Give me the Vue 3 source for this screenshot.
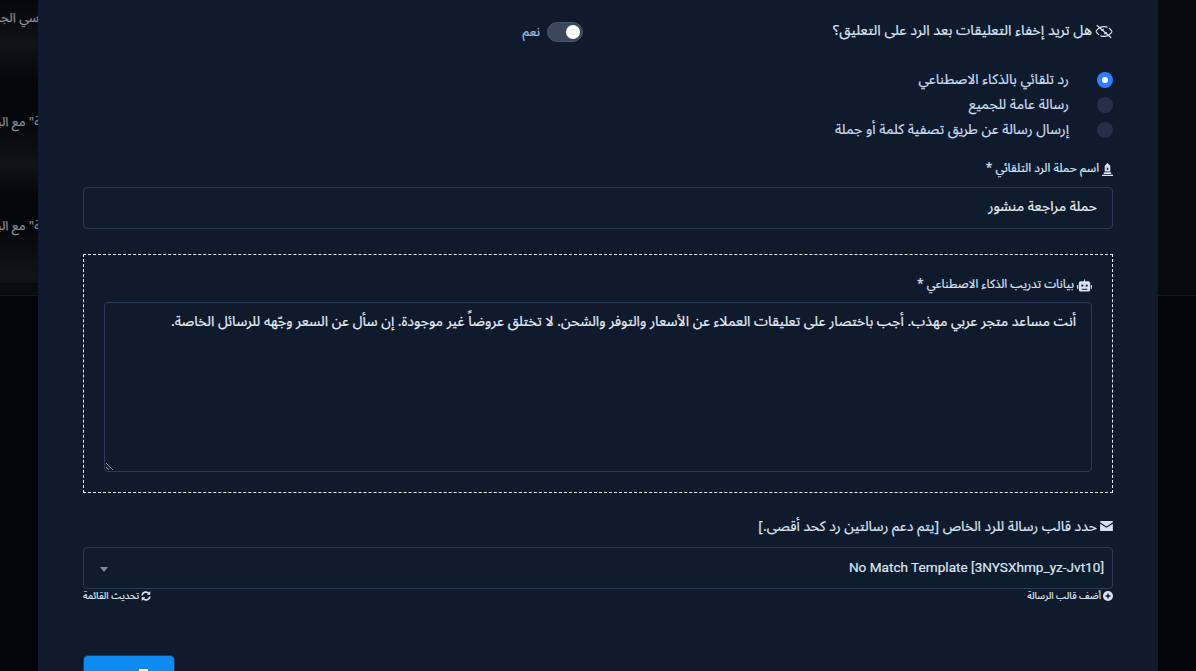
<script setup>
const radios = [
  { text: 'رد تلقائي بالذكاء الاصطناعي', on: true },
  { text: 'رسالة عامة للجميع', on: false },
  { text: 'إرسال رسالة عن طريق تصفية كلمة أو جملة', on: false }
]
const backdropRows = [
  { text: 'أساسي الجديد', shift: -18 },
  { text: 'الصفحة" مع البيع', shift: -36 },
  { text: 'الصفحة" مع البيع', shift: -36 }
]
</script>

<template>
  <div class="page" dir="rtl">
    <aside class="side side-right"></aside>
    <main class="modal">
      <section class="toggle-row">
        <div class="q-label">
          <svg class="i-eye" viewBox="0 0 20 16" fill="none" stroke="currentColor" stroke-width="1.3">
            <path d="M2 1l16 14" />
            <path d="M1 8c2-3.500 5-5.500 9-5.500 1.500 0 3 .3 4 .9M19 8c-2 3.500-5 5.500-9 5.500-1.500 0-3-.3-4-.9" />
            <path d="M1 8c1 1.500 2 2.700 3.500 3.500M19 8c-1-1.500-2-2.700-3.500-3.500" />
            <path d="M7 7a3.200 3.200 0 0 1 3-1.500M13 9a3.200 3.200 0 0 1-3 1.500" />
          </svg>
          <span>هل تريد إخفاء التعليقات بعد الرد على التعليق؟</span>
        </div>
        <div class="toggle-wrap">
          <span class="switch"><span class="knob"></span></span>
          <span class="yes">نعم</span>
        </div>
      </section>

      <section class="radios">
        <div v-for="r in radios" :key="r.text" class="radio-row">
          <span class="radio" :class="{ on: r.on }"></span>
          <span class="radio-text">{{ r.text }}</span>
        </div>
      </section>

      <label class="small-label name-label">
        <svg class="i-small" viewBox="0 0 12 14" fill="currentColor">
          <path d="M6 0l3 3v6.200H3V3zM2 10h8v2H2zM0 12.700h12V14H0z" />
          <path d="M5.200 5h1.600v2.500H5.200z" fill="#0f1b2d" />
        </svg>
        <span>اسم حملة الرد التلقائي *</span>
      </label>
      <div class="field">حملة مراجعة منشور</div>

      <section class="dashed">
        <label class="small-label ai-label">
          <svg class="i-robot" viewBox="0 0 16 13" fill="currentColor">
            <path d="M7.400 0h1.200v2H12a2 2 0 0 1 2 2v7a2 2 0 0 1-2 2H4a2 2 0 0 1-2-2V4a2 2 0 0 1 2-2h3.400z" />
            <path d="M0 6h1.300v4H0zM14.700 6H16v4h-1.300z" />
            <circle cx="5.700" cy="6.500" r="1.200" fill="#0f1b2d" />
            <circle cx="10.300" cy="6.500" r="1.200" fill="#0f1b2d" />
            <path d="M5 10h6v1H5z" fill="#0f1b2d" />
          </svg>
          <span>بيانات تدريب الذكاء الاصطناعي *</span>
        </label>
        <div class="textarea">
          <span>أنت مساعد متجر عربي مهذب. أجب باختصار على تعليقات العملاء عن الأسعار والتوفر والشحن. لا تختلق عروضاً غير موجودة. إن سأل عن السعر وجّهه للرسائل الخاصة.</span>
          <svg class="grip" viewBox="0 0 8 8" stroke="#b8c0cc" stroke-width=".8" fill="none">
            <path d="M0 1l7 7M0 5l3 3" />
          </svg>
        </div>
      </section>

      <label class="tpl-label">
        <svg class="i-mail" viewBox="0 0 14 11" fill="currentColor">
          <path d="M0 0h14v1.400L7 6 0 1.400zM0 3l7 4.500L14 3v8H0z" />
        </svg>
        <span>حدد قالب رسالة للرد الخاص [يتم دعم رسالتين رد كحد أقصى.]</span>
      </label>
      <div class="select">
        <span class="select-value" dir="ltr">No Match Template [3NYSXhmp_yz-Jvt10]</span>
        <span class="caret"></span>
      </div>
      <div class="under">
        <span class="under-item">
          <svg class="i-tiny" viewBox="0 0 10 10">
            <circle cx="5" cy="5" r="5" fill="currentColor" />
            <path d="M5 2.500v5M2.500 5h5" stroke="#0f1b2d" stroke-width="1.400" />
          </svg>
          أضف قالب الرسالة
        </span>
        <span class="under-item">
          <svg class="i-tiny" viewBox="0 0 10 10" fill="none" stroke="currentColor" stroke-width="1.700">
            <path d="M1 4.300A4 4 0 0 1 8 2.500M9 5.700A4 4 0 0 1 2 7.500" />
            <path d="M9 .5v3H6M1 9.500v-3h3" fill="currentColor" stroke-width=".6" />
          </svg>
          تحديث القائمة
        </span>
      </div>

      <div class="actions">
        <button class="save" type="button"><span class="save-icon"></span></button>
      </div>
    </main>
    <aside class="side side-left">
      <div v-for="(t, i) in backdropRows" :key="i" class="bg-row">
        <span class="bg-text" :style="{ marginRight: t.shift + 'px' }">{{ t.text }}</span>
      </div>
    </aside>
  </div>
</template>

<style>
html, body { margin: 0; background: #02050c; overflow: hidden; }
</style>

<style scoped>
.page {
  width: 1196px;
  height: 671px;
  overflow: hidden;
  display: grid;
  grid-template-columns: 38px 1120px 38px;
  font-family: "Noto Sans Arabic", Roboto, "Noto Sans", sans-serif;
  background: #02050c;
  color: #dbe7f5;
  -webkit-text-stroke: 0.2px currentColor;
}
.side { height: 671px; overflow: hidden; }
.side-right {
  background: linear-gradient(#06090f 0 295px, #14171d 295px 296px, #02050c 296px);
}
.side-left {
  background: linear-gradient(#05070c 0, #101318 45px, #04060b 80px, #05070c 120px, #101318 165px, #04060b 195px, #05070c 230px, #0f1217 270px, #0f1217 283px, #080b10 283px, #080b10 295px, #14171d 295px, #14171d 296px, #02050c 296px);
  display: flex;
  flex-direction: column;
}
.modal {
  background: #0f1a2c;
  height: 671px;
  padding: 0 45px;
  box-sizing: border-box;
  overflow: hidden;
}
.toggle-row {
  display: grid;
  grid-template-columns: 500px 500px;
  column-gap: 30px;
  align-items: center;
  padding-top: 20px;
  height: 24px;
}
.q-label {
  display: flex;
  align-items: center;
  gap: 3px;
  font-size: 14.4px;
  line-height: 20px;
  color: #d7e4f3;
  padding-bottom: 2px;
}
.i-eye { width: 18px; height: 15px; flex: none; }
.toggle-wrap { display: flex; align-items: center; gap: 7px; }
.switch {
  width: 36px;
  height: 20px;
  box-sizing: border-box;
  border-radius: 10px;
  background: #3a485e;
  border: 1px solid #465570;
  display: flex;
  justify-content: flex-start;
  align-items: center;
  padding: 0 2px;
}
.knob { width: 14px; height: 14px; border-radius: 50%; background: #fff; }
.yes { font-size: 13px; line-height: 20px; color: #9fc0e4; }
.radios { margin-top: 28px; display: flex; flex-direction: column; gap: 9px; }
.radio-row { display: flex; align-items: center; height: 16px; }
.radio {
  width: 16px;
  height: 16px;
  flex: none;
  border-radius: 50%;
  background: #243049;
  margin-left: 28px;
}
.radio.on {
  background: #2d7ff9;
  position: relative;
}
.radio.on::after {
  content: "";
  position: absolute;
  left: 5px;
  top: 5px;
  width: 6px;
  height: 6px;
  background: #fff;
  border-radius: 50%;
}
.radio-text { font-size: 14px; line-height: 16px; color: #c9dcf2; }
.small-label {
  display: flex;
  align-items: center;
  gap: 3px;
  font-size: 12px;
  line-height: 16px;
  color: #d7e4f3;
}
.name-label { margin-top: 23px; height: 16px; }
.i-small { width: 11px; height: 13px; flex: none; }
.field {
  margin-top: 10px;
  height: 42px;
  box-sizing: border-box;
  border: 1px solid #2a3b58;
  border-radius: 4px;
  background: #0f1c2e;
  padding: 0 15px;
  font-size: 14px;
  line-height: 38px;
  color: #e5edf7;
}
.dashed {
  margin-top: 25px;
  height: 239px;
  box-sizing: border-box;
  border: 1px dashed #e8edf3;
  padding: 20px;
}
.ai-label { height: 20px; }
.i-robot { width: 15px; height: 13px; flex: none; color: #d5e3f5; }
.textarea {
  position: relative;
  margin-top: 7px;
  height: 170px;
  box-sizing: border-box;
  border: 1px solid #2a3b58;
  border-radius: 4px;
  padding: 9px 15px;
  font-size: 14.08px;
  line-height: 20px;
  color: #e5edf7;
}
.grip { position: absolute; left: 1px; bottom: 1px; width: 8px; height: 8px; }
.tpl-label {
  margin-top: 23px;
  display: flex;
  align-items: center;
  gap: 3px;
  height: 20px;
  font-size: 14px;
  color: #d7e4f3;
}
.i-mail { width: 13px; height: 10px; flex: none; color: #d5e3f5; }
.select {
  margin-top: 11px;
  height: 42px;
  box-sizing: border-box;
  border: 1px solid #2a3b58;
  border-radius: 4px;
  background: #0f1c2e;
  display: flex;
  justify-content: space-between;
  align-items: center;
  padding: 0 8px 0 16px;
}
.select-value { font-family: Roboto, sans-serif; font-size: 13.6px; color: #dbe7f5; padding-bottom: 2px; }
.caret {
  width: 0;
  height: 0;
  border-top: 5px solid #7f8790;
  border-left: 4px solid transparent;
  border-right: 4px solid transparent;
  margin-top: 3px;
}
.under {
  display: flex;
  justify-content: space-between;
  margin-top: 1px;
  font-size: 9.8px;
  line-height: 12px;
  color: #d7e4f3;
}
.under-item { display: flex; align-items: center; gap: 2px; }
.i-tiny { width: 10px; height: 10px; flex: none; }
.actions { margin-top: 53px; display: flex; justify-content: flex-end; }
.save {
  width: 92px;
  height: 60px;
  border: 1px solid #2a3b58;
  border-radius: 5px;
  background: #0d8bf0;
  padding: 13px 0 0 28px;
  display: flex;
  justify-content: center;
  align-items: flex-start;
}
.save-icon { width: 9px; height: 12px; background: #fff; }
.bg-row {
  height: 104px;
  flex: none;
  box-sizing: border-box;
  padding-top: 8px;
  display: flex;
  justify-content: flex-start;
  white-space: nowrap;
  font-size: 13px;
  line-height: 20px;
  color: #8d9299;
}
.bg-text { flex: none; }
</style>
